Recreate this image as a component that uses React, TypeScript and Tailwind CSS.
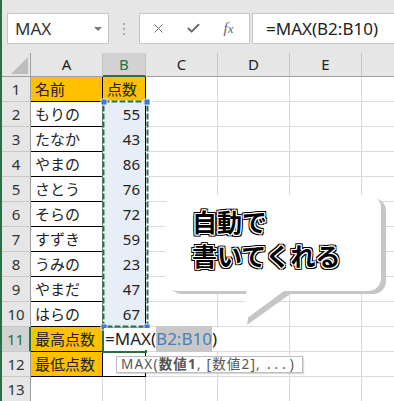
import clsx from "clsx";
import { X, Check } from "lucide-react";

const names = ["もりの", "たなか", "やまの", "さとう", "そらの", "すずき", "うみの", "やまだ", "はらの"];
const scores = [55, 43, 86, 76, 72, 59, 23, 47, 67];

const outline =
  "[text-shadow:1px_0_0_#fff,-1px_0_0_#fff,0_1px_0_#fff,0_-1px_0_#fff,1px_1px_0_#fff,-1px_-1px_0_#fff,1px_-1px_0_#fff,-1px_1px_0_#fff,2px_0_0_#000,-2px_0_0_#000,0_2px_0_#000,0_-2px_0_#000,2px_2px_0_#000,-2px_-2px_0_#000,2px_-2px_0_#000,-2px_2px_0_#000]";

function RowHead({ n, active }: { n: number; active?: boolean }) {
  return (
    <div
      className={clsx(
        "flex h-full w-[29px] shrink-0 items-center justify-center border-b border-b-[#c8c8c8] text-[15px]",
        active
          ? "border-r-2 border-r-[#217346] bg-[#d2d2d2] text-[#217346]"
          : "border-r border-r-[#9e9e9e] bg-[#e6e6e6] text-[#333]"
      )}
    >
      {n}
    </div>
  );
}

// plain empty cells C..F
function Blank() {
  return (
    <>
      <div className="h-full w-[72px] shrink-0 border-r border-b border-[#dadada]" />
      <div className="h-full w-[72px] shrink-0 border-r border-b border-[#dadada]" />
      <div className="h-full w-[72px] shrink-0 border-r border-b border-[#dadada]" />
      <div className="h-full flex-1 border-b border-[#dadada]" />
    </>
  );
}

export default function App() {
  return (
    <div className="relative h-[401px] w-[394px] overflow-hidden border-l-2 border-[#217346] bg-white font-['Noto_Sans','Noto_Sans_CJK_JP',sans-serif] text-[#222]">
      {/* formula bar */}
      <div className="flex h-[53px] items-start bg-[#e6e6e6] pt-[13px]">
        <div className="ml-[5px] flex h-[31px] w-[102px] items-center justify-between border border-[#c6c6c6] bg-white pr-[6px] pl-[7px]">
          <span className="text-[17px] text-[#333]">MAX</span>
          <span className="h-0 w-0 border-t-[4px] border-r-[4px] border-l-[4px] border-t-[#777] border-r-transparent border-l-transparent" />
        </div>
        <div className="flex h-[31px] w-[30px] flex-col items-center justify-center gap-[3px]">
          <span className="h-[2px] w-[2px] bg-[#aaa]" />
          <span className="h-[2px] w-[2px] bg-[#aaa]" />
          <span className="h-[2px] w-[2px] bg-[#aaa]" />
        </div>
        <div className="flex h-[31px] w-[111px] items-center border border-[#c6c6c6] bg-white pl-[1px]">
          <div className="flex w-[35px] justify-center">
            <X size={15} strokeWidth={1.6} color="#6f6f6f" />
          </div>
          <div className="flex w-[35px] justify-center">
            <Check size={15} strokeWidth={3.2} color="#6a6a6a" />
          </div>
          <div className="flex w-[35px] items-baseline justify-center font-['Liberation_Serif',serif] text-[#666] italic">
            <span className="text-[15px]">f</span>
            <span className="text-[13px]">x</span>
          </div>
        </div>
        <div className="ml-[2px] flex h-[31px] flex-1 items-center border border-r-0 border-[#c6c6c6] bg-white pl-[13px] text-[17px]">
          =MAX(B2:B10)
        </div>
      </div>

      {/* column header */}
      <div className="flex h-[24px]">
        <div className="relative h-full w-[29px] shrink-0 border-r border-b border-[#9e9e9e] bg-[#e6e6e6]">
          <span className="absolute right-[2px] bottom-[2px] h-0 w-0 border-b-[17px] border-l-[17px] border-b-[#bdbdbd] border-l-transparent" />
        </div>
        <div className="flex h-full w-[72px] shrink-0 items-center justify-center border-r border-b border-r-[#c4c4c4] border-b-[#9e9e9e] bg-[#e6e6e6] text-[15px]">A</div>
        <div className="flex h-full w-[43px] shrink-0 items-center justify-center border-r border-b-2 border-r-[#c4c4c4] border-b-[#217346] bg-[#d2d2d2] text-[15px] text-[#217346]">B</div>
        <div className="flex h-full w-[72px] shrink-0 items-center justify-center border-r border-b border-r-[#c4c4c4] border-b-[#9e9e9e] bg-[#e6e6e6] text-[15px]">C</div>
        <div className="flex h-full w-[72px] shrink-0 items-center justify-center border-r border-b border-r-[#c4c4c4] border-b-[#9e9e9e] bg-[#e6e6e6] text-[15px]">D</div>
        <div className="flex h-full w-[72px] shrink-0 items-center justify-center border-r border-b border-r-[#c4c4c4] border-b-[#9e9e9e] bg-[#e6e6e6] text-[15px]">E</div>
        <div className="h-full flex-1 border-b border-b-[#9e9e9e] bg-[#e6e6e6]" />
      </div>

      {/* row 1 */}
      <div className="flex h-[25px] text-[15px]">
        <RowHead n={1} />
        <div className="flex h-full w-[72px] shrink-0 items-center border-r border-b border-black bg-[#ffc000] pl-[4px]">名前</div>
        <div className="flex h-full w-[43px] shrink-0 items-center border-r border-b border-black bg-[#ffc000] pl-[4px]">点数</div>
        <Blank />
      </div>

      {names.map((name, i) => (
        <div key={name + i} className="flex h-[25px] text-[15px]">
          <RowHead n={i + 2} />
          <div className="flex h-full w-[72px] shrink-0 items-center border-r border-b border-black pl-[4px]">{name}</div>
          <div className="flex h-full w-[43px] shrink-0 items-center justify-end border-r border-b border-r-black border-b-[#e8eef7] bg-[#e8eef7] pr-[5px]">
            {scores[i]}
          </div>
          <Blank />
        </div>
      ))}

      {/* row 11 */}
      <div className="flex h-[25px] text-[15px]">
        <RowHead n={11} active />
        <div className="flex h-full w-[72px] shrink-0 items-center border-r border-b border-black bg-[#ffc000] pl-[4px]">最高点数</div>
        <div className="relative h-full w-[43px] shrink-0">
          <div className="absolute -top-px -left-px h-[27px] w-[45px] border-2 border-[#217346]" />
          <div className="absolute top-[1px] left-[1px] z-10 flex h-[22px] items-center bg-white pr-[8px] pl-[1px] text-[17px] whitespace-nowrap">
            =MAX(<span className="bg-[#c8c8c8] text-[#4a7ebb]">B2:B10</span>)
          </div>
        </div>
        <Blank />
      </div>

      {/* row 12 */}
      <div className="flex h-[25px] text-[15px]">
        <RowHead n={12} />
        <div className="flex h-full w-[72px] shrink-0 items-center border-r border-b border-black bg-[#ffc000] pl-[4px]">最低点数</div>
        <div className="h-full w-[43px] shrink-0 border-r border-b border-black" />
        <Blank />
      </div>

      {/* row 13 */}
      <div className="flex h-[25px] text-[15px]">
        <RowHead n={13} />
        <div className="h-full w-[72px] shrink-0 border-r border-b border-[#dadada]" />
        <div className="h-full w-[43px] shrink-0 border-r border-b border-[#dadada]" />
        <Blank />
      </div>

      {/* copy range marquee over B2:B10 */}
      <svg className="pointer-events-none absolute top-0 left-0" width="394" height="401">
        <rect x="101.5" y="101.5" width="44" height="225" fill="none" stroke="#fff" strokeWidth="2" />
        <rect x="101.5" y="101.5" width="44" height="225" fill="none" stroke="#217346" strokeWidth="2" strokeDasharray="6 2" />
        <rect x="99" y="99" width="6" height="6" fill="#3c78d8" stroke="#fff" strokeWidth="0.8" />
        <rect x="142" y="99" width="6" height="6" fill="#3c78d8" stroke="#fff" strokeWidth="0.8" />
        <rect x="99" y="324" width="6" height="6" fill="#3c78d8" stroke="#fff" strokeWidth="0.8" />
        <rect x="142" y="324" width="6" height="6" fill="#3c78d8" stroke="#fff" strokeWidth="0.8" />
      </svg>

      {/* function tooltip */}
      <div className="absolute top-[356px] left-[114px] z-20 flex h-[17px] items-center border border-[#bdbdbd] bg-white px-[4px] text-[13.5px] tracking-[1.2px] whitespace-nowrap text-[#555] shadow-[1px_1px_1px_rgba(0,0,0,0.15)]">
        MAX(<span className="font-bold">数値1</span>, [数値2],<span className="ml-[6px] tracking-[4px]">...)</span>
      </div>

      {/* speech bubble */}
      <svg className="pointer-events-none absolute top-0 left-[-2px] z-20" width="396" height="401">
        <rect x="169" y="198" width="217" height="96" rx="13" fill="#c6c6c6" />
        <polygon points="252,292 293,292 247,325" fill="#c6c6c6" />
        <rect x="165" y="195" width="216" height="96" rx="13" fill="#fff" />
        <polygon points="247,288 288,288 242,322" fill="#fff" />
      </svg>
      <div className={clsx("absolute top-[204px] left-[190px] z-30 text-[25px] leading-[34px] font-bold text-black font-['Noto_Sans_CJK_JP',sans-serif]", outline)}>
        <div>自動で</div>
        <div>書いてくれる</div>
      </div>
    </div>
  );
}
